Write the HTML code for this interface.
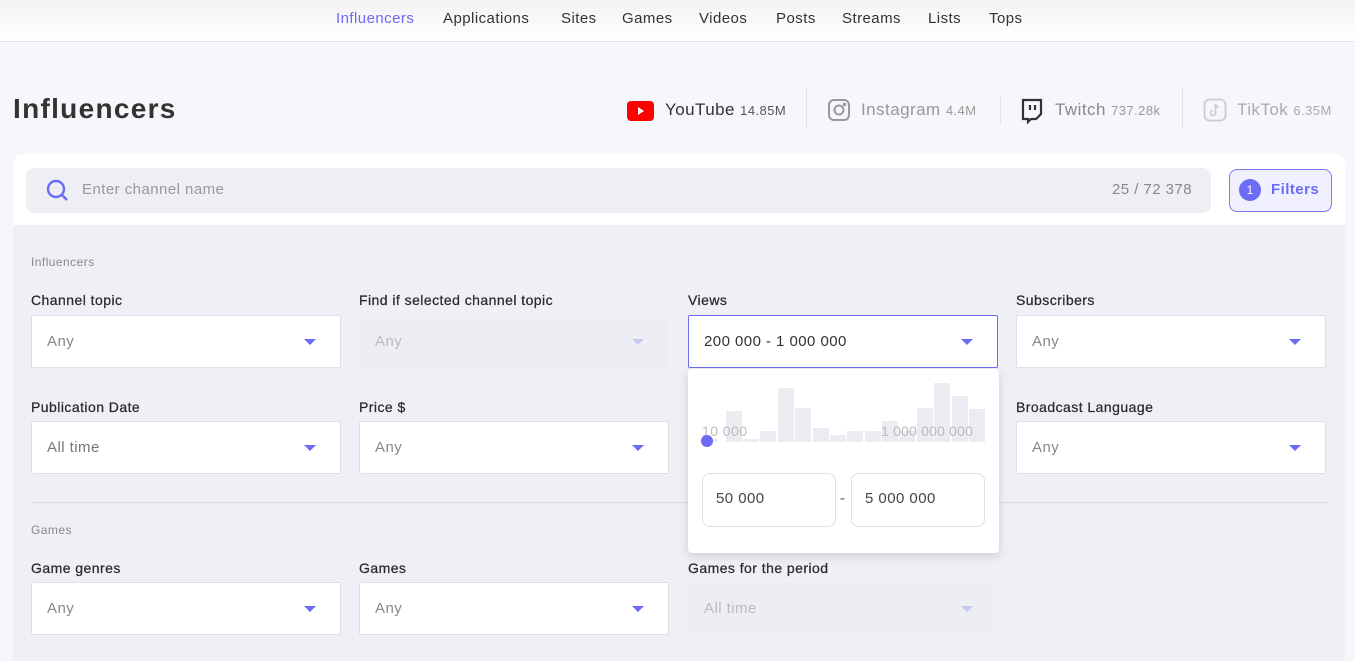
<!DOCTYPE html>
<html><head><meta charset="utf-8"><style>
*{box-sizing:border-box;margin:0;padding:0}
html,body{width:1355px;height:661px;overflow:hidden}
body{background:#f6f7fb;font-family:"Liberation Sans",sans-serif;color:#333;position:relative;letter-spacing:.45px}
.a{position:absolute;white-space:nowrap}
.nav{position:absolute;left:0;top:0;width:1355px;height:42px;background:linear-gradient(#f3f3f5,#fff);border-bottom:1px solid #e2e2e6}
.nav span{position:absolute;top:10px;font-size:15px;color:#333}
.card{position:absolute;left:13px;top:154px;width:1332px;height:520px;background:#eff0f5;border-radius:10px;overflow:hidden}
.lbl{font-size:14px;color:#2a2a2a;-webkit-text-stroke:.25px #2a2a2a}
.box{position:absolute;width:310px;height:53px;background:#fff;border:1px solid #dfe0e6;border-radius:2px}
.box span{position:absolute;left:15px;top:17px;font-size:15px;color:#888}
.box i{position:absolute;right:24px;top:23px;width:0;height:0;border-left:6px solid transparent;border-right:6px solid transparent;border-top:6px solid #6b6bf5}
.dis{background:#eceef3;border-color:#eceef3}
.dis span{color:#bbb}.dis i{border-top-color:#c8c8f0}
.bar{position:absolute;width:16px;background:#ebecf2;bottom:219px}
</style></head><body>
<div class="nav">
<span style="left:336px;color:#6b6bf5">Influencers</span><span style="left:443px">Applications</span><span style="left:561px">Sites</span><span style="left:622px">Games</span><span style="left:699px">Videos</span><span style="left:776px">Posts</span><span style="left:842px">Streams</span><span style="left:928px">Lists</span><span style="left:989px">Tops</span>
</div>
<div class="a" style="left:13px;top:93px;font-size:28px;font-weight:bold;color:#333;letter-spacing:1.3px">Influencers</div>

<svg class="a" style="left:627px;top:101px" width="27" height="20"><rect width="27" height="20" rx="4" fill="#f00"/><path d="M11 6v8l6-4z" fill="#fff"/></svg>
<div class="a" style="left:665px;top:100px;font-size:17px;color:#333">YouTube <span style="font-size:13px;color:#555">14.85M</span></div>
<div class="a" style="left:806px;top:89px;width:1px;height:40px;background:#e2e3e8"></div>
<svg class="a" style="left:827px;top:98px" width="24" height="24" fill="none" stroke="#999" stroke-width="2"><rect x="2" y="2" width="20" height="20" rx="5"/><circle cx="12" cy="12" r="4.5"/><circle cx="17.5" cy="6.5" r=".8" fill="#999"/></svg>
<div class="a" style="left:861px;top:100px;font-size:17px;color:#999">Instagram <span style="font-size:13px">4.4M</span></div>
<div class="a" style="left:1000px;top:96px;width:1px;height:28px;background:#e2e3e8"></div>
<svg class="a" style="left:1021px;top:98px" width="22" height="26" fill="none" stroke="#333" stroke-width="2.2"><path d="M2 2h18v14l-5 5h-5l-3 3v-3H2z"/><path d="M9 7v5M14 7v5"/></svg>
<div class="a" style="left:1055px;top:100px;font-size:17px;color:#888">Twitch <span style="font-size:13px;color:#999">737.28k</span></div>
<div class="a" style="left:1182px;top:89px;width:1px;height:40px;background:#e2e3e8"></div>
<svg class="a" style="left:1203px;top:98px" width="24" height="24" fill="none" stroke="#ccc" stroke-width="1.8"><rect x="1.5" y="1.5" width="21" height="21" rx="5"/><path d="M12.5 6v9a2.5 2.5 0 1 1-2.5-2.5M12.5 6c0 2 1.5 3 3.5 3"/></svg>
<div class="a" style="left:1237px;top:100px;font-size:17px;color:#aaa">TikTok <span style="font-size:13px">6.35M</span></div>

<div class="card">
<div class="a" style="left:0;top:0;width:1332px;height:71px;background:#fff"></div>
<div class="a" style="left:13px;top:14px;width:1185px;height:45px;background:#eeeff4;border-radius:8px"></div>
<svg class="a" style="left:33px;top:25px" width="24" height="24" fill="none" stroke="#6b6bf5" stroke-width="2.4"><circle cx="10" cy="10" r="8"/><path d="M16 16l5 5"/></svg>
<div class="a" style="left:69px;top:27px;font-size:15px;color:#999">Enter channel name</div>
<div class="a" style="left:1099px;top:27px;font-size:15px;color:#888">25 / 72 378</div>
<div class="a" style="left:1216px;top:15px;width:103px;height:43px;border:1px solid #7b7bf5;border-radius:8px;background:#f0f0ff"></div>
<div class="a" style="left:1226px;top:25px;width:22px;height:22px;border-radius:50%;background:#6b6bf5;color:#fff;font-size:12px;text-align:center;line-height:22px;letter-spacing:0">1</div>
<div class="a" style="left:1258px;top:27px;font-size:15px;color:#6b6bf5;font-weight:bold">Filters</div>

<div class="a" style="left:18px;top:101px;font-size:12px;color:#888">Influencers</div>
<div class="a lbl" style="left:18px;top:138px">Channel topic</div>
<div class="a lbl" style="left:346px;top:138px">Find if selected channel topic</div>
<div class="a lbl" style="left:675px;top:138px">Views</div>
<div class="a lbl" style="left:1003px;top:138px">Subscribers</div>
<div class="box" style="left:18px;top:161px"><span>Any</span><i></i></div>
<div class="box dis" style="left:346px;top:161px"><span>Any</span><i></i></div>
<div class="box" style="left:675px;top:161px;border-color:#6b6bf5"><span style="color:#333">200 000 - 1 000 000</span><i></i></div>
<div class="box" style="left:1003px;top:161px"><span>Any</span><i></i></div>

<div class="a lbl" style="left:18px;top:245px">Publication Date</div>
<div class="a lbl" style="left:346px;top:245px">Price $</div>
<div class="a lbl" style="left:1003px;top:245px">Broadcast Language</div>
<div class="box" style="left:18px;top:267px"><span style="color:#777">All time</span><i></i></div>
<div class="box" style="left:346px;top:267px"><span>Any</span><i></i></div>
<div class="box" style="left:1003px;top:267px"><span>Any</span><i></i></div>

<div class="a" style="left:18px;top:348px;width:1297px;height:1px;background:#dcdde3"></div>
<div class="a" style="left:18px;top:369px;font-size:12px;color:#888">Games</div>
<div class="a lbl" style="left:18px;top:406px">Game genres</div>
<div class="a lbl" style="left:346px;top:406px">Games</div>
<div class="a lbl" style="left:675px;top:406px">Games for the period</div>
<div class="box" style="left:18px;top:428px"><span>Any</span><i></i></div>
<div class="box" style="left:346px;top:428px"><span>Any</span><i></i></div>
<div class="box dis" style="left:675px;top:428px"><span>All time</span><i></i></div>
</div>

<div class="a" style="left:688px;top:369px;width:311px;height:184px;background:#fff;border-radius:4px;box-shadow:0 3px 10px rgba(0,0,0,.15)"></div>
<div style="position:absolute;left:0;top:0;width:1355px;height:661px;pointer-events:none">
<div class="bar" style="left:702px;height:3px"></div>
<div class="bar" style="left:726px;height:31px"></div>
<div class="bar" style="left:743px;height:3px"></div>
<div class="bar" style="left:760px;height:11px"></div>
<div class="bar" style="left:778px;height:54px"></div>
<div class="bar" style="left:795px;height:34px"></div>
<div class="bar" style="left:813px;height:14px"></div>
<div class="bar" style="left:830px;height:7px"></div>
<div class="bar" style="left:847px;height:11px"></div>
<div class="bar" style="left:865px;height:11px"></div>
<div class="bar" style="left:882px;height:21px"></div>
<div class="bar" style="left:899px;height:11px"></div>
<div class="bar" style="left:917px;height:34px"></div>
<div class="bar" style="left:934px;height:59px"></div>
<div class="bar" style="left:952px;height:46px"></div>
<div class="bar" style="left:969px;height:33px"></div>
</div>
<div class="a" style="left:702px;top:423px;font-size:14px;color:#bbb">10 000</div>
<div class="a" style="left:881px;top:423px;font-size:14px;color:#bbb;letter-spacing:.2px">1 000 000 000</div>
<div class="a" style="left:701px;top:435px;width:12px;height:12px;border-radius:50%;background:#6b6bf5"></div>
<div class="a" style="left:702px;top:473px;width:134px;height:54px;border:1px solid #e0e0e4;border-radius:8px"></div>
<div class="a" style="left:716px;top:490px;font-size:15px;color:#444">50 000</div>
<div class="a" style="left:840px;top:490px;font-size:15px;color:#555">-</div>
<div class="a" style="left:851px;top:473px;width:134px;height:54px;border:1px solid #e0e0e4;border-radius:8px"></div>
<div class="a" style="left:865px;top:490px;font-size:15px;color:#444">5 000 000</div>
</body></html>
